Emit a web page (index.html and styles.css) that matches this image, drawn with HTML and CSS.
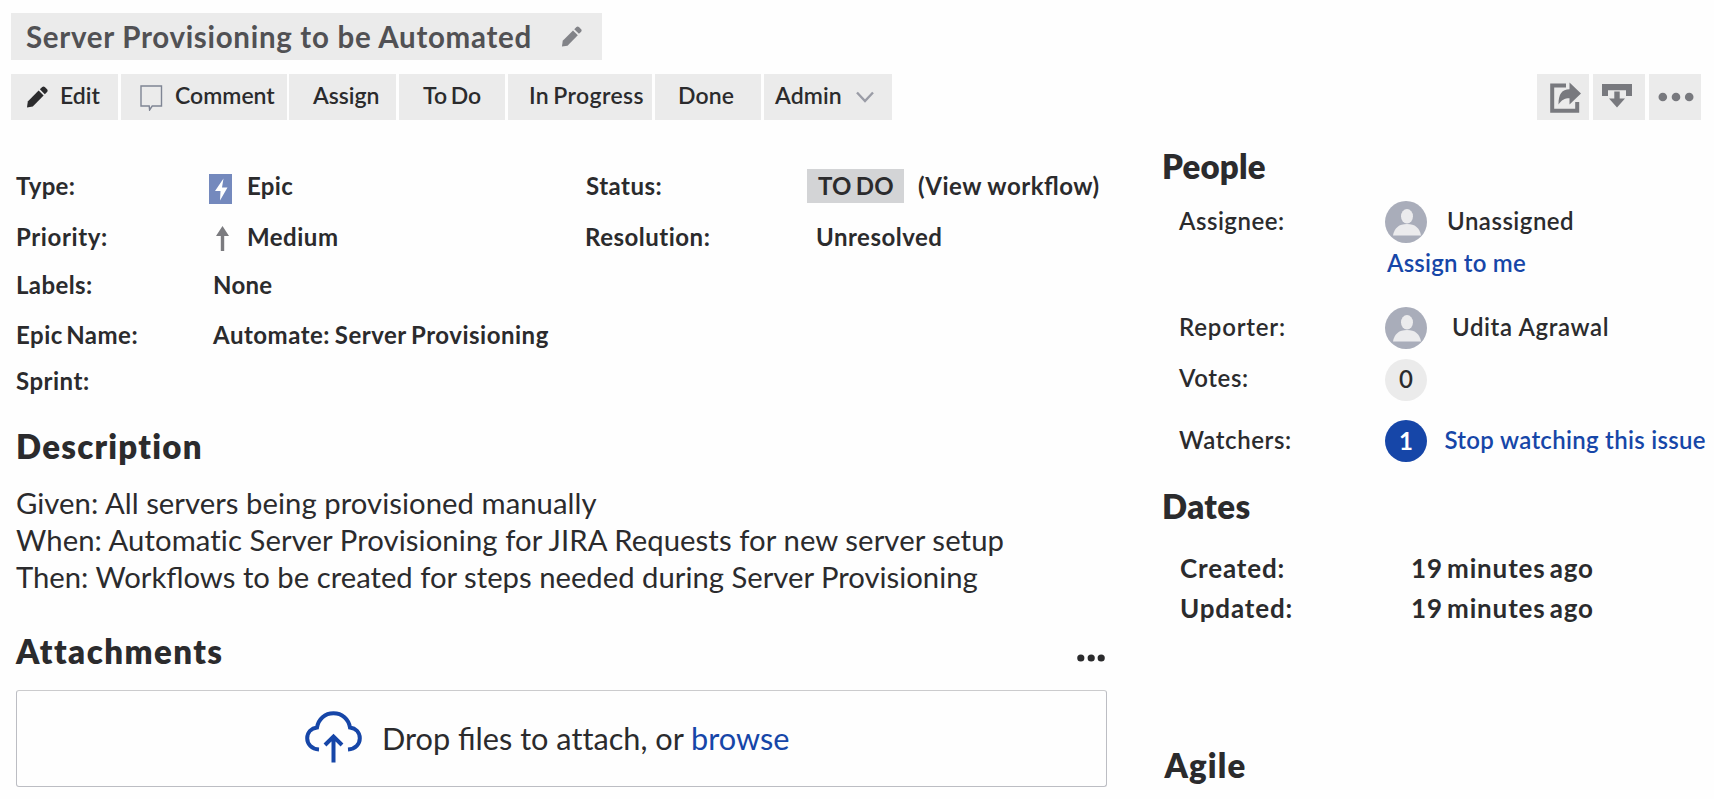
FILE: index.html
```html
<!DOCTYPE html>
<html lang="en">
<head>
<meta charset="utf-8">
<title>Server Provisioning to be Automated</title>
<link rel="stylesheet" href="styles.css">
</head>
<body>
<svg class="defs" aria-hidden="true">
  <symbol id="pencil" viewBox="0 0 22 22"><path d="M1 21.5l.8-6L12.6 4.6l5 5L6.800 20.600z"/><path d="M13.900 3.300l2.300-2.300q1.300-1 2.600 0l2.300 2.300q1 1.300 0 2.600l-2.300 2.300z"/></symbol>
  <symbol id="avatar" viewBox="0 0 42 42"><circle cx="21" cy="21" r="21" fill="#a9adba"/><ellipse cx="22" cy="15.300" rx="6" ry="7.200" fill="#ebebed"/><path d="M8 34.500q2-11.500 14-11.500t14 11.500z" fill="#ebebed"/></symbol>
</svg>
<div class="page">
  <header class="title">
    <h1>Server Provisioning to be Automated</h1>
    <svg class="title-pencil"><use href="#pencil"/></svg>
  </header>
  <nav class="toolbar">
    <button class="btn edit"><svg class="pencil"><use href="#pencil"/></svg>Edit</button>
    <button class="btn comment"><svg class="bubble" viewBox="0 0 23 26"><path d="M1 1h20.500v20H12.200l-2.600 4-.4-4H1z" fill="none" stroke="#7f8594" stroke-width="1.400"/></svg>Comment</button>
    <button class="btn assign">Assign</button>
    <button class="btn todo">To Do</button>
    <button class="btn progress">In Progress</button>
    <button class="btn done">Done</button>
    <button class="btn admin">Admin<svg class="chevron" viewBox="0 0 18 12"><path d="M1 1.500l8 8.500 8-8.500" fill="none" stroke="#9a9ca6" stroke-width="2.400"/></svg></button>
    <span class="grow"></span>
    <button class="btn icon share" aria-label="Share"><svg viewBox="0 0 32 31"><path d="M16 3.500H2.200v25.300h25V20" fill="none" stroke="#78797e" stroke-width="4"/><path d="M8.500 22.500C8.500 12 12 7.300 19.500 7.300V.500L31 11.500 19.500 22.500v-6.300c-5 0-8 1.800-11 6.300z" fill="#78797e"/></svg></button>
    <button class="btn icon export" aria-label="Export"><svg viewBox="0 0 30 24"><path d="M0 0h30v12h-6V6.300H6V12H0z" fill="#78797e"/><path d="M12.300 7.500h5.400v7H23l-8 9-8-9h5.300z" fill="#78797e"/></svg></button>
    <button class="btn icon more" aria-label="More"><svg viewBox="0 0 36 10"><g fill="#78797e"><circle cx="4.800" cy="5" r="4.300"/><circle cx="18" cy="5" r="4.300"/><circle cx="31.200" cy="5" r="4.300"/></g></svg></button>
  </nav>
  <div class="columns">
    <main class="main">
      <div class="fields">
        <span class="s3">Type:</span>
        <span class="with-icon s3"><svg class="epic" viewBox="0 0 23 30"><rect width="23" height="30" fill="#7489bd"/><path d="M14.500 4.500L6 17h5.500l-.5 9.500L18.500 13.500H13z" fill="#fff"/></svg>Epic</span>
        <span class="s5 status">Status:</span>
        <span class="state"><span class="pill">TO DO</span><span class="s5">(View work<span class="lig">fl</span>ow)</span></span>
        <span class="s6">Priority:</span>
        <span class="with-icon s5"><svg class="arrow" viewBox="0 0 13 25"><path d="M6.500 0L13 10H8.200v15H4.800V10H0z" fill="#7b7b7f"/></svg>Medium</span>
        <span class="s5 resolution">Resolution:</span>
        <span class="s5 unresolved">Unresolved</span>
        <span class="s4">Labels:</span><span class="plain s3">None</span><span></span><span></span>
        <span class="s5 tight">Epic Name:</span><span class="plain s5 automate">Automate: Server Provisioning</span><span></span><span></span>
        <span class="s5">Sprint:</span>
      </div>
      <h2 class="h-description">Description</h2>
      <p class="text"><span class="given">Given: All servers being provisioned manually</span><br><span class="when">When: Automatic Server Provisioning for JIRA Requests for new server setup</span><br>Then: Work<span class="lig">fl</span>ows to be created for steps needed during Server Provisioning</p>
      <div class="attach-head">
        <h2 class="h-attachments">Attachments</h2>
        <svg class="dots" viewBox="0 0 28 8"><g fill="#2b2b2d"><circle cx="3.800" cy="4" r="3.600"/><circle cx="14.200" cy="4" r="3.600"/><circle cx="24.200" cy="4" r="3.600"/></g></svg>
      </div>
      <div class="drop">
        <svg class="cloud" viewBox="0 0 57 52" fill="none" stroke="#1646a8" stroke-width="4"><path d="M14 38.500C6.500 38 2.200 33 2.200 27.300c0-6 4.300-10 9.800-10.800C13.300 8 20 2.200 28.500 2.200S43.700 8 45 16.500c5.500.8 9.800 4.800 9.800 10.800 0 5.700-4.300 10.700-11.800 11.200"/><path d="M28.500 51.500V26M20 34l8.500-8.500L37 34"/></svg>
        <span>Drop <span class="lig">fi</span>les to attach, or <a>browse</a></span>
      </div>
    </main>
    <aside class="side">
      <h2 class="h-people">People</h2>
      <div class="people">
        <div class="row"><span class="key s5">Assignee:</span><svg class="badge"><use href="#avatar"/></svg><span class="s5 name-a">Unassigned</span></div>
        <a class="assign-me s2">Assign to me</a>
        <div class="row reporter"><span class="key s8">Reporter:</span><svg class="badge"><use href="#avatar"/></svg><span class="s6 name-b">Udita Agrawal</span></div>
        <div class="row votes"><span class="key s6">Votes:</span><span class="badge count">0</span></div>
        <div class="row watchers"><span class="key s6">Watchers:</span><span class="badge count on">1</span><a class="s3">Stop watching this issue</a></div>
      </div>
      <h2 class="h-dates">Dates</h2>
      <div class="dates">
        <span>Created:</span><span class="tight">19 minutes ago</span>
        <span>Updated:</span><span class="tight">19 minutes ago</span>
      </div>
      <h2 class="h-agile">Agile</h2>
    </aside>
  </div>
</div>
</body>
</html>
```
FILE: styles.css
```css
* { box-sizing: border-box; }
body { margin: 0; background: #fefefe; color: #2b2b2d; font-family: Lato, sans-serif; font-feature-settings: "liga" 0; }
.lig { font-feature-settings: "liga" 1; }
.defs { display: none; }
.page { height: 799px; overflow: hidden; padding-top: 13px; }
h1, h2, p { margin: 0; }
a { color: #1646a8; }
svg { display: block; flex: none; }

.title { display: flex; align-items: center; width: 591px; height: 47px; margin-left: 11px; padding-left: 15px; background: #ebebeb; color: #515154; }
h1 { font-size: 29.5px; line-height: 36px; font-weight: 700; letter-spacing: .7px; white-space: nowrap; }
.title-pencil { width: 21px; height: 21px; margin: 0 0 1px 29px; fill: #828388; }

.toolbar { display: flex; height: 46px; margin: 14px 13px 0 11px; }
.btn { display: flex; align-items: center; flex: none; height: 46px; margin: 0; padding: 0 0 4px; border: 0; background: #ebebeb; color: inherit; font: 600 23px/28px Lato, sans-serif; white-space: nowrap; }
.edit { width: 107px; padding-left: 15px; }
.pencil { width: 22px; height: 22px; margin: 4px 12px 0 0; fill: #2b2b2d; }
.comment { width: 166px; margin-left: 3px; padding-left: 19px; }
.bubble { width: 23px; height: 26px; margin: 5px 12px 0 0; }
.assign { width: 107px; margin-left: 2px; padding-left: 24px; }
.todo { width: 106px; margin-left: 3px; padding-left: 24px; word-spacing: -2px; }
.progress { width: 144px; margin-left: 3px; padding-left: 21px; letter-spacing: .4px; word-spacing: -2px; }
.done { width: 106px; margin-left: 3px; padding-left: 23px; letter-spacing: .1px; }
.admin { width: 128px; margin-left: 3px; padding-left: 11px; letter-spacing: .1px; }
.chevron { width: 18px; height: 12px; margin: 4px 0 0 14px; }
.grow { flex: 1; }
.icon { width: 52px; margin-left: 4px; padding: 0; }
.share svg { width: 32px; height: 31px; margin-left: 13px; }
.export svg { width: 30px; height: 24px; margin: 0 0 2px 9px; }
.more svg { width: 36px; height: 10px; margin-left: 9px; }

.columns { display: grid; grid-template-columns: 1161px 1fr; }
.main { padding: 51px 0 0 16px; }
.fields { display: grid; grid-template-columns: 193px 377px 221px 1fr; grid-template-rows: 50.5px 48px 50px 46.5px 30px; align-items: start; font-size: 24px; line-height: 30px; font-weight: 700; white-space: nowrap; }
.with-icon { display: flex; }
.epic { width: 23px; height: 30px; margin: 3px 15px 0 0; }
.arrow { width: 13px; height: 25px; margin: 4px 18px 0 7px; }
.plain { padding-left: 4px; }
.automate { word-spacing: -1.500px; }
.state { display: flex; }
.pill { width: 97px; height: 34px; margin: -2px 14px 0 0; padding: 2px 0 0 11px; background: #d3d4d6; word-spacing: -1.500px; letter-spacing: .1px; }
.resolution { margin-left: -1px; }
.unresolved { padding-left: 9px; }
.tight { word-spacing: -3px; }
.s2 { letter-spacing: .2px; }
.s3 { letter-spacing: .3px; }
.s4 { letter-spacing: .4px; }
.s5 { letter-spacing: .5px; }
.s6 { letter-spacing: .6px; }
.s8 { letter-spacing: .8px; }

h2 { font-size: 33px; line-height: 40px; font-weight: 800; }
.h-description { margin-top: 29.5px; letter-spacing: 1.25px; }
.text { margin-top: 18px; font-size: 29.25px; line-height: 37.2px; white-space: nowrap; }
.given { letter-spacing: .05px; }
.when { letter-spacing: .09px; }
.attach-head { display: flex; justify-content: space-between; align-items: center; width: 1089px; margin-top: 35.5px; }
.h-attachments { letter-spacing: 1.45px; }
.dots { width: 28px; height: 8px; margin-top: 14px; }
.drop { display: flex; align-items: center; width: 1091px; height: 97px; margin-top: 19.5px; padding-left: 288px; border: 1.5px solid #bcbdc3; border-top-color: #cbcbcd; border-radius: 3px; font-size: 30.7px; line-height: 38px; }
.cloud { width: 57px; height: 52px; margin: 0 20px 4px 0; }

.side { padding-top: 26px; white-space: nowrap; }
.h-people { padding-left: 1px; letter-spacing: .2px; }
.people { padding: 15px 0 0 18px; font-size: 24px; line-height: 30px; font-weight: 600; }
.row { display: flex; align-items: center; height: 42px; }
.row > span:not(.badge), .row > a { margin-top: -2.500px; }
.key { width: 206px; }
.badge { width: 42px; height: 42px; }
.name-a { padding-left: 20px; }
.name-b { padding-left: 25px; }
.row > a { padding-left: 17.500px; }
.assign-me { display: block; margin: 5px 0 0 208px; }
.reporter { margin-top: 29px; }
.votes { margin-top: 9.500px; }
.watchers { margin-top: 19.500px; }
.count { display: flex; align-items: center; justify-content: center; padding-bottom: 2px; border-radius: 50%; background: #ebebeb; }
.count.on { padding-bottom: 0; background: #1646a8; color: #fff; font-weight: 700; }
.h-dates { margin-top: 24px; padding-left: 1px; letter-spacing: .4px; }
.dates { display: grid; grid-template-columns: 231px 1fr; row-gap: 7.700px; padding: 26px 0 0 19px; font-size: 26px; line-height: 32px; font-weight: 700; letter-spacing: .85px; }
.h-agile { margin: 121px 0 0 3.5px; letter-spacing: 1.1px; }
```
